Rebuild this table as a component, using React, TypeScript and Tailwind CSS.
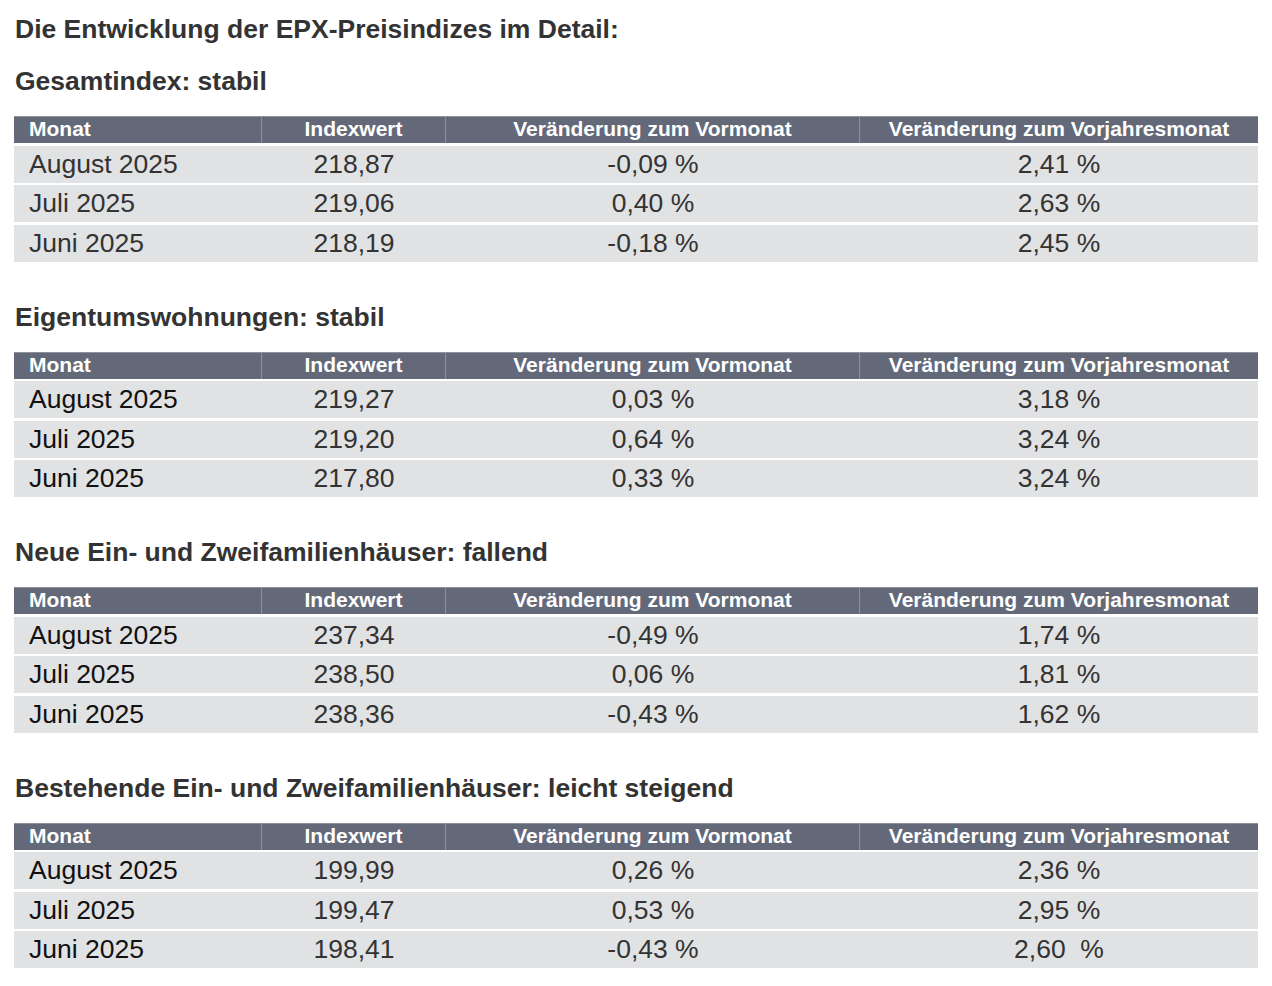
const sections = [
  {
    title: 'Gesamtindex: stabil',
    dark: false,
    rows: [
      ['August 2025', '218,87', '-0,09 %', '2,41 %'],
      ['Juli 2025', '219,06', '0,40 %', '2,63 %'],
      ['Juni 2025', '218,19', '-0,18 %', '2,45 %'],
    ],
  },
  {
    title: 'Eigentumswohnungen: stabil',
    dark: true,
    rows: [
      ['August 2025', '219,27', '0,03 %', '3,18 %'],
      ['Juli 2025', '219,20', '0,64 %', '3,24 %'],
      ['Juni 2025', '217,80', '0,33 %', '3,24 %'],
    ],
  },
  {
    title: 'Neue Ein- und Zweifamilienhäuser: fallend',
    dark: true,
    rows: [
      ['August 2025', '237,34', '-0,49 %', '1,74 %'],
      ['Juli 2025', '238,50', '0,06 %', '1,81 %'],
      ['Juni 2025', '238,36', '-0,43 %', '1,62 %'],
    ],
  },
  {
    title: 'Bestehende Ein- und Zweifamilienhäuser: leicht steigend',
    dark: true,
    rows: [
      ['August 2025', '199,99', '0,26 %', '2,36 %'],
      ['Juli 2025', '199,47', '0,53 %', '2,95 %'],
      ['Juni 2025', '198,41', '-0,43 %', '2,60\u00a0 %'],
    ],
  },
];

const cols = 'grid grid-cols-[248px_184px_414px_398px]';

function IndexTable({ rows, dark }: { rows: string[][]; dark: boolean }) {
  return (
    <div className="w-[1244px] ml-[-1px]">
      <div className={`${cols} h-[27px] bg-[#636979] text-white text-[21px] font-bold leading-[24px] border-t border-[#8d919c]`}>
        <div className="pl-[15px] border-r border-[#8d919c]">Monat</div>
        <div className="text-center border-r border-[#8d919c]">Indexwert</div>
        <div className="text-center border-r border-[#8d919c]">Veränderung zum Vormonat</div>
        <div className="text-center">Veränderung zum Vorjahresmonat</div>
      </div>
      {rows.map((r) => (
        <div key={r[0]} className={`${cols} h-[37px] mt-[2.5px] bg-[#e1e2e4] text-[26.5px] leading-[36px] text-[#333]`}>
          <div className={`pl-[15px] ${dark ? 'text-[#111]' : 'text-[#333]'}`}>{r[0]}</div>
          <div className="text-center">{r[1]}</div>
          <div className="text-center">{r[2]}</div>
          <div className="text-center whitespace-pre">{r[3]}</div>
        </div>
      ))}
    </div>
  );
}

export default function App() {
  return (
    <div className="min-h-screen bg-white pl-[15px] pt-[14px] font-['Liberation_Sans',Arial,sans-serif]">
      <h1 className="text-[26.5px] font-bold leading-[30px] text-[#333]">Die Entwicklung der EPX-Preisindizes im Detail:</h1>
      {sections.map((s, i) => (
        <section key={s.title} className={i === 0 ? 'mt-[22px]' : 'mt-[40px]'}>
          <h2 className="text-[26.5px] font-bold leading-[30px] text-[#333]">{s.title}</h2>
          <div className="mt-[20px]">
            <IndexTable rows={s.rows} dark={s.dark} />
          </div>
        </section>
      ))}
    </div>
  );
}
